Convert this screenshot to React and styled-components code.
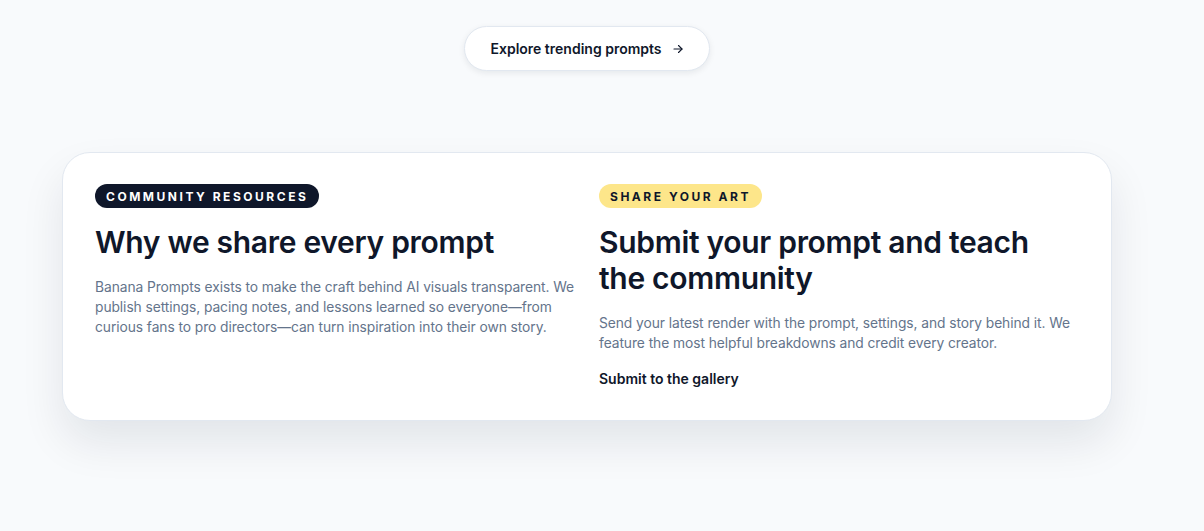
import React from 'react'
import styled, { createGlobalStyle } from 'styled-components'

const Global = createGlobalStyle`
  html, body {
    margin: 0;
    padding: 0;
    background: #f8fafc;
    font-family: Inter, "Noto Sans", sans-serif;
    color: #0f172a;
  }
`

const Page = styled.div`
  width: 1050px;
  margin-left: 62px;
  padding: 26px 0 100px;
  display: flex;
  flex-direction: column;
  align-items: center;
`

const PillButton = styled.button`
  box-sizing: border-box;
  display: inline-flex;
  align-items: center;
  gap: 10px;
  height: 45px;
  padding: 0 25px;
  border-radius: 999px;
  border: 1px solid #e2e8f0;
  background: #fff;
  box-shadow: 0 2px 6px rgba(15, 23, 42, 0.08);
  font-family: inherit;
  font-size: 14px;
  font-weight: 600;
  color: #0f172a;
  cursor: pointer;
`

const Card = styled.section`
  box-sizing: border-box;
  width: 100%;
  margin-top: 81px;
  padding: 31px 32px 33px;
  background: #fff;
  border: 1px solid #e2e8f0;
  border-radius: 28px;
  box-shadow: 0 22px 44px rgba(15, 23, 42, 0.09);
  display: grid;
  grid-template-columns: 1fr 1fr;
  gap: 24px;
`

const Column = styled.div`
  display: flex;
  flex-direction: column;
  align-items: flex-start;
`

const Badge = styled.span`
  display: inline-flex;
  align-items: center;
  height: 24px;
  padding: 0 11px;
  border-radius: 999px;
  background: ${p => (p.$tone === 'yellow' ? '#fde68a' : '#0f172a')};
  color: ${p => (p.$tone === 'yellow' ? '#0f172a' : '#fff')};
  font-size: 12px;
  font-weight: 700;
  letter-spacing: 0.21em;
  text-transform: uppercase;
`

const Heading = styled.h2`
  margin: 16px 0 0;
  font-size: 30px;
  line-height: 36px;
  font-weight: 600;
  letter-spacing: -0.01em;
  color: #0f172a;
`

const Body = styled.p`
  margin: 17px 0 0;
  font-size: 13.8px;
  line-height: 20px;
  letter-spacing: -0.005em;
  color: #64748b;
`

const Link = styled.a`
  margin-top: 17px;
  font-size: 14px;
  font-weight: 600;
  color: #0f172a;
  text-decoration: none;
`

const Arrow = () => (
  <svg width="12" height="12" viewBox="0 0 24 24" fill="none" stroke="currentColor" strokeWidth="2.2" strokeLinecap="round" strokeLinejoin="round">
    <path d="M4 12h16" />
    <path d="m13 5 7 7-7 7" />
  </svg>
)

const App = () => (
  <>
    <Global />
    <Page>
      <PillButton>
        Explore trending prompts <Arrow />
      </PillButton>
      <Card>
        <Column>
          <Badge>Community resources</Badge>
          <Heading>Why we share every prompt</Heading>
          <Body>
            Banana Prompts exists to make the craft behind AI visuals transparent. We publish settings,
            pacing notes, and lessons learned so everyone—from curious fans to pro directors—can turn
            inspiration into their own story.
          </Body>
        </Column>
        <Column>
          <Badge $tone="yellow">Share your art</Badge>
          <Heading>Submit your prompt and teach the community</Heading>
          <Body>
            Send your latest render with the prompt, settings, and story behind it. We feature the most
            helpful breakdowns and credit every creator.
          </Body>
          <Link href="#">Submit to the gallery</Link>
        </Column>
      </Card>
    </Page>
  </>
)

export default App
